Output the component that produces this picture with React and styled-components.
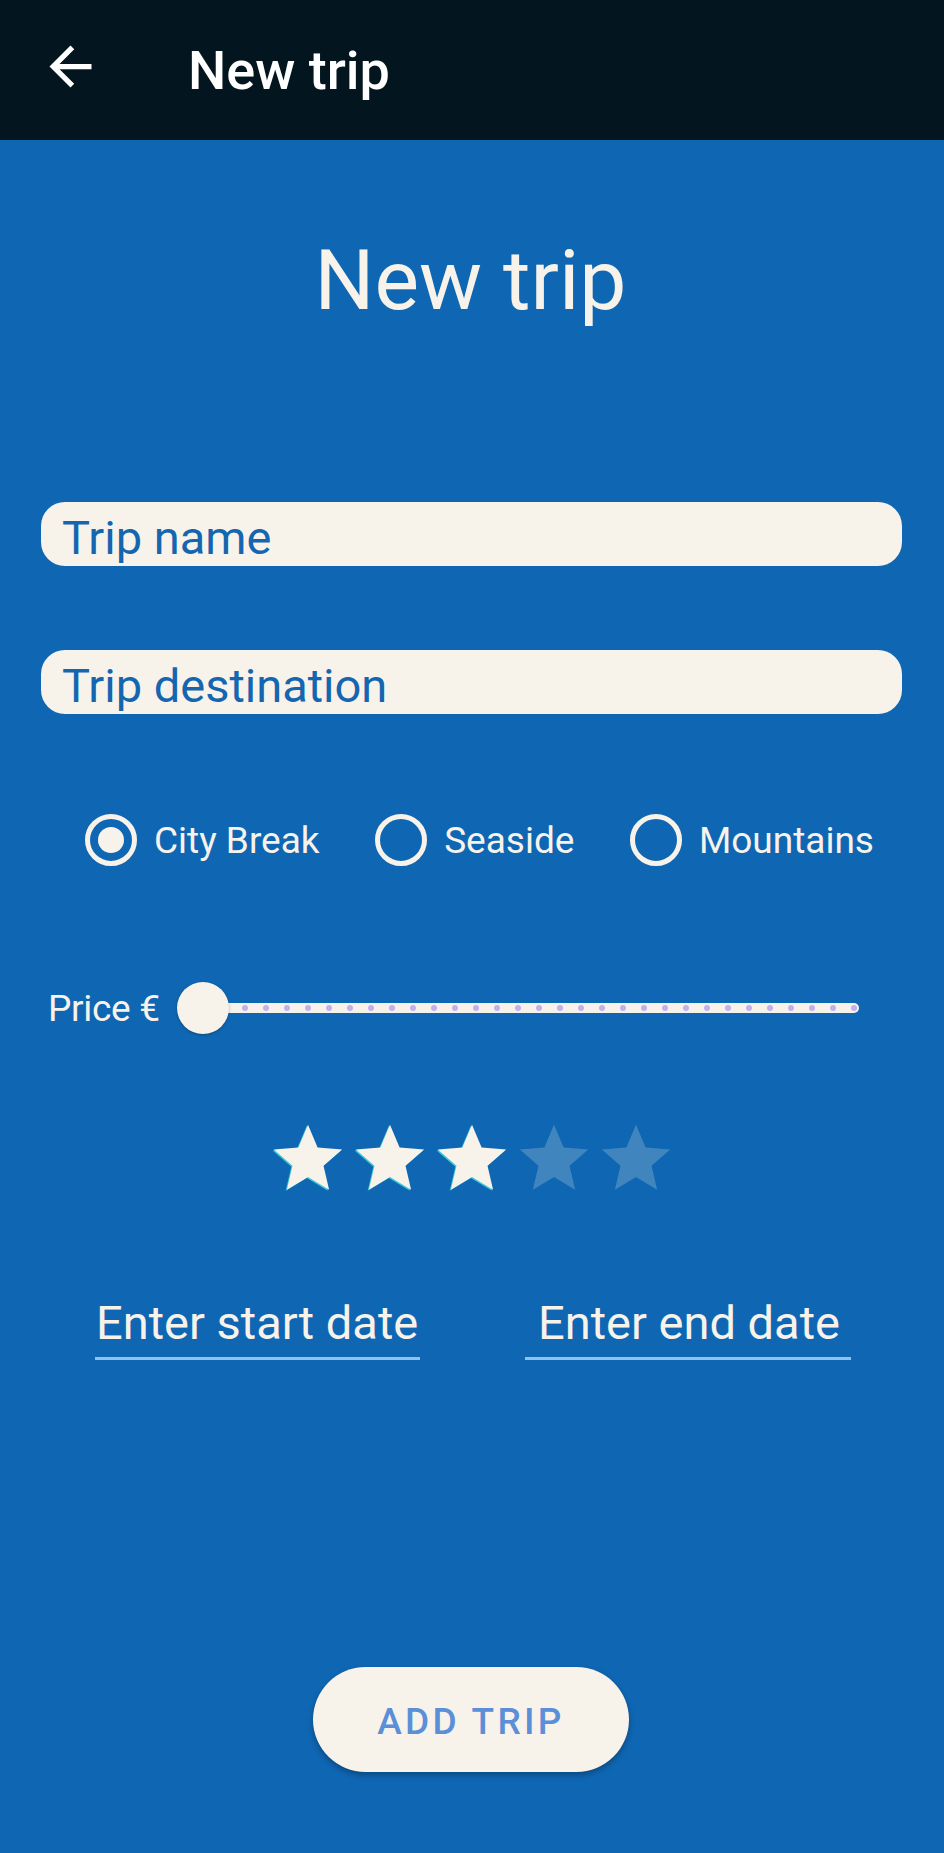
import styled, { createGlobalStyle } from "styled-components";

const BLUE = "#0f67b4";
const CREAM = "#f8f3ea";

const GlobalStyle = createGlobalStyle`
  html, body {
    margin: 0;
    padding: 0;
    background: ${BLUE};
  }
  body {
    font-family: Roboto, "Noto Sans", "Liberation Sans", sans-serif;
  }
  * {
    box-sizing: border-box;
  }
`;

const Page = styled.div`
  width: 944px;
  min-height: 1853px;
  background: ${BLUE};
  display: flex;
  flex-direction: column;
`;

const TopBar = styled.header`
  height: 140px;
  background: #03161f;
  display: flex;
  align-items: center;
  padding-left: 39px;
  flex: none;
`;

const BackButton = styled.button`
  width: 63px;
  height: 63px;
  padding: 0;
  border: none;
  background: transparent;
  display: flex;
  cursor: pointer;
  margin-top: -7px;

  svg {
    width: 63px;
    height: 63px;
    fill: #ffffff;
  }
`;

const BarTitle = styled.h1`
  margin: 0 0 0 86px;
  font-size: 54px;
  font-weight: 500;
  color: #ffffff;
`;

const Form = styled.main`
  display: flex;
  flex-direction: column;
  padding-top: 92px;
  padding-bottom: 60px;
`;

const Heading = styled.h2`
  margin: 0;
  font-size: 84px;
  line-height: 98px;
  font-weight: 400;
  color: ${CREAM};
  text-align: center;
  padding-right: 3px;
`;

const TextField = styled.input`
  display: block;
  margin: ${(p) => p.$top}px 42px 0 41px;
  width: 861px;
  height: 64px;
  border: none;
  outline: none;
  border-radius: 24px;
  background: ${CREAM};
  padding: 6px 20px 0 21px;
  font-family: Roboto, sans-serif;
  font-size: 47px;
  color: #1566b0;

  &::placeholder {
    color: #1566b0;
    opacity: 1;
  }
`;

const RadioRow = styled.div`
  margin-top: 100px;
  height: 52px;
  display: flex;
  align-items: center;
  gap: 55.5px;
  padding-left: 85px;
`;

const RadioItem = styled.label`
  display: flex;
  align-items: center;
  gap: 17px;
  font-size: 37px;
  color: ${CREAM};
  cursor: pointer;
`;

const RadioCircle = styled.span`
  width: 52px;
  height: 52px;
  border-radius: 50%;
  border: 5.5px solid ${CREAM};
  display: flex;
  align-items: center;
  justify-content: center;
  flex: none;

  &::after {
    content: "";
    width: 26px;
    height: 26px;
    border-radius: 50%;
    background: ${CREAM};
    display: ${(p) => (p.$checked ? "block" : "none")};
  }
`;

const SliderRow = styled.div`
  margin-top: 116px;
  height: 52px;
  display: flex;
  align-items: center;
  padding-left: 48px;
`;

const SliderLabel = styled.span`
  width: 129px;
  flex: none;
  font-size: 37px;
  letter-spacing: -0.3px;
  color: ${CREAM};
`;

const SliderBox = styled.div`
  position: relative;
  width: 686px;
  height: 52px;
  display: flex;
  align-items: center;
  padding-left: 21px;
  padding-right: 4px;
`;

const Track = styled.div`
  flex: 1;
  height: 10px;
  border-radius: 5px;
  background: ${CREAM};
  display: flex;
  align-items: center;
  justify-content: space-between;
  padding: 0 2px;
`;

const Tick = styled.span`
  width: 6px;
  height: 6px;
  border-radius: 50%;
  background: #c3b0ee;
`;

const Thumb = styled.span`
  position: absolute;
  left: 0;
  top: 0;
  width: 52px;
  height: 52px;
  border-radius: 50%;
  background: ${CREAM};
  box-shadow: 0 1px 3px rgba(0, 0, 0, 0.3);
`;

const Stars = styled.div`
  margin-top: 84px;
  display: flex;
  justify-content: center;

  svg {
    width: 82px;
    height: 82px;
    display: block;
  }
`;

const DateRow = styled.div`
  margin-top: 95px;
  display: flex;
  justify-content: center;
  gap: 105px;
  padding-left: 2px;
`;

const DateField = styled.div`
  width: ${(p) => p.$width}px;
  font-size: 47px;
  line-height: 56px;
  color: ${CREAM};
  padding-left: ${(p) => p.$inset}px;
  padding-bottom: 6px;
  border-bottom: 3px solid #8fc1ee;
  white-space: nowrap;
`;

const AddButton = styled.button`
  margin: 307px auto 0;
  width: 316px;
  height: 105px;
  border: none;
  border-radius: 53px;
  background: ${CREAM};
  box-shadow: 0 3px 6px rgba(0, 0, 0, 0.3);
  font-family: Roboto, sans-serif;
  font-weight: 500;
  font-size: 37px;
  letter-spacing: 3.3px;
  color: #5b8fd8;
  text-transform: uppercase;
  position: relative;
  left: -1px;
  padding-top: 4px;
  cursor: pointer;
`;

const STAR = "M12 17.27L18.18 21l-1.64-7.03L22 9.24l-7.19-.61L12 2 9.19 8.63 2 9.24l5.46 4.73L5.82 21z";

function Star({ filled }) {
  return (
    <svg viewBox="0 0 24 24">
      {filled ? (
        <>
          <path d={STAR} fill="#3ec9d6" transform="translate(-0.35 0.3)" />
          <path d={STAR} fill={CREAM} />
        </>
      ) : (
        <path d={STAR} fill="rgba(248,243,234,0.22)" />
      )}
    </svg>
  );
}

export default function App() {
  const rating = 3;
  const options = ["City Break", "Seaside", "Mountains"];

  return (
    <Page>
      <GlobalStyle />
      <TopBar>
        <BackButton aria-label="Back">
          <svg viewBox="0 0 24 24">
            <path d="M20 11H7.83l5.59-5.59L12 4l-8 8 8 8 1.41-1.41L7.83 13H20v-2z" />
          </svg>
        </BackButton>
        <BarTitle>New trip</BarTitle>
      </TopBar>

      <Form>
        <Heading>New trip</Heading>
        <TextField $top={172} placeholder="Trip name" />
        <TextField $top={84} placeholder="Trip destination" />

        <RadioRow>
          {options.map((o, i) => (
            <RadioItem key={o}>
              <RadioCircle $checked={i === 0} />
              {o}
            </RadioItem>
          ))}
        </RadioRow>

        <SliderRow>
          <SliderLabel>Price €</SliderLabel>
          <SliderBox>
            <Track>
              {Array.from({ length: 32 }).map((_, i) => (
                <Tick key={i} />
              ))}
            </Track>
            <Thumb />
          </SliderBox>
        </SliderRow>

        <Stars>
          {[1, 2, 3, 4, 5].map((n) => (
            <Star key={n} filled={n <= rating} />
          ))}
        </Stars>

        <DateRow>
          <DateField $width={325} $inset={1}>Enter start date</DateField>
          <DateField $width={326} $inset={13}>Enter end date</DateField>
        </DateRow>

        <AddButton>Add trip</AddButton>
      </Form>
    </Page>
  );
}
